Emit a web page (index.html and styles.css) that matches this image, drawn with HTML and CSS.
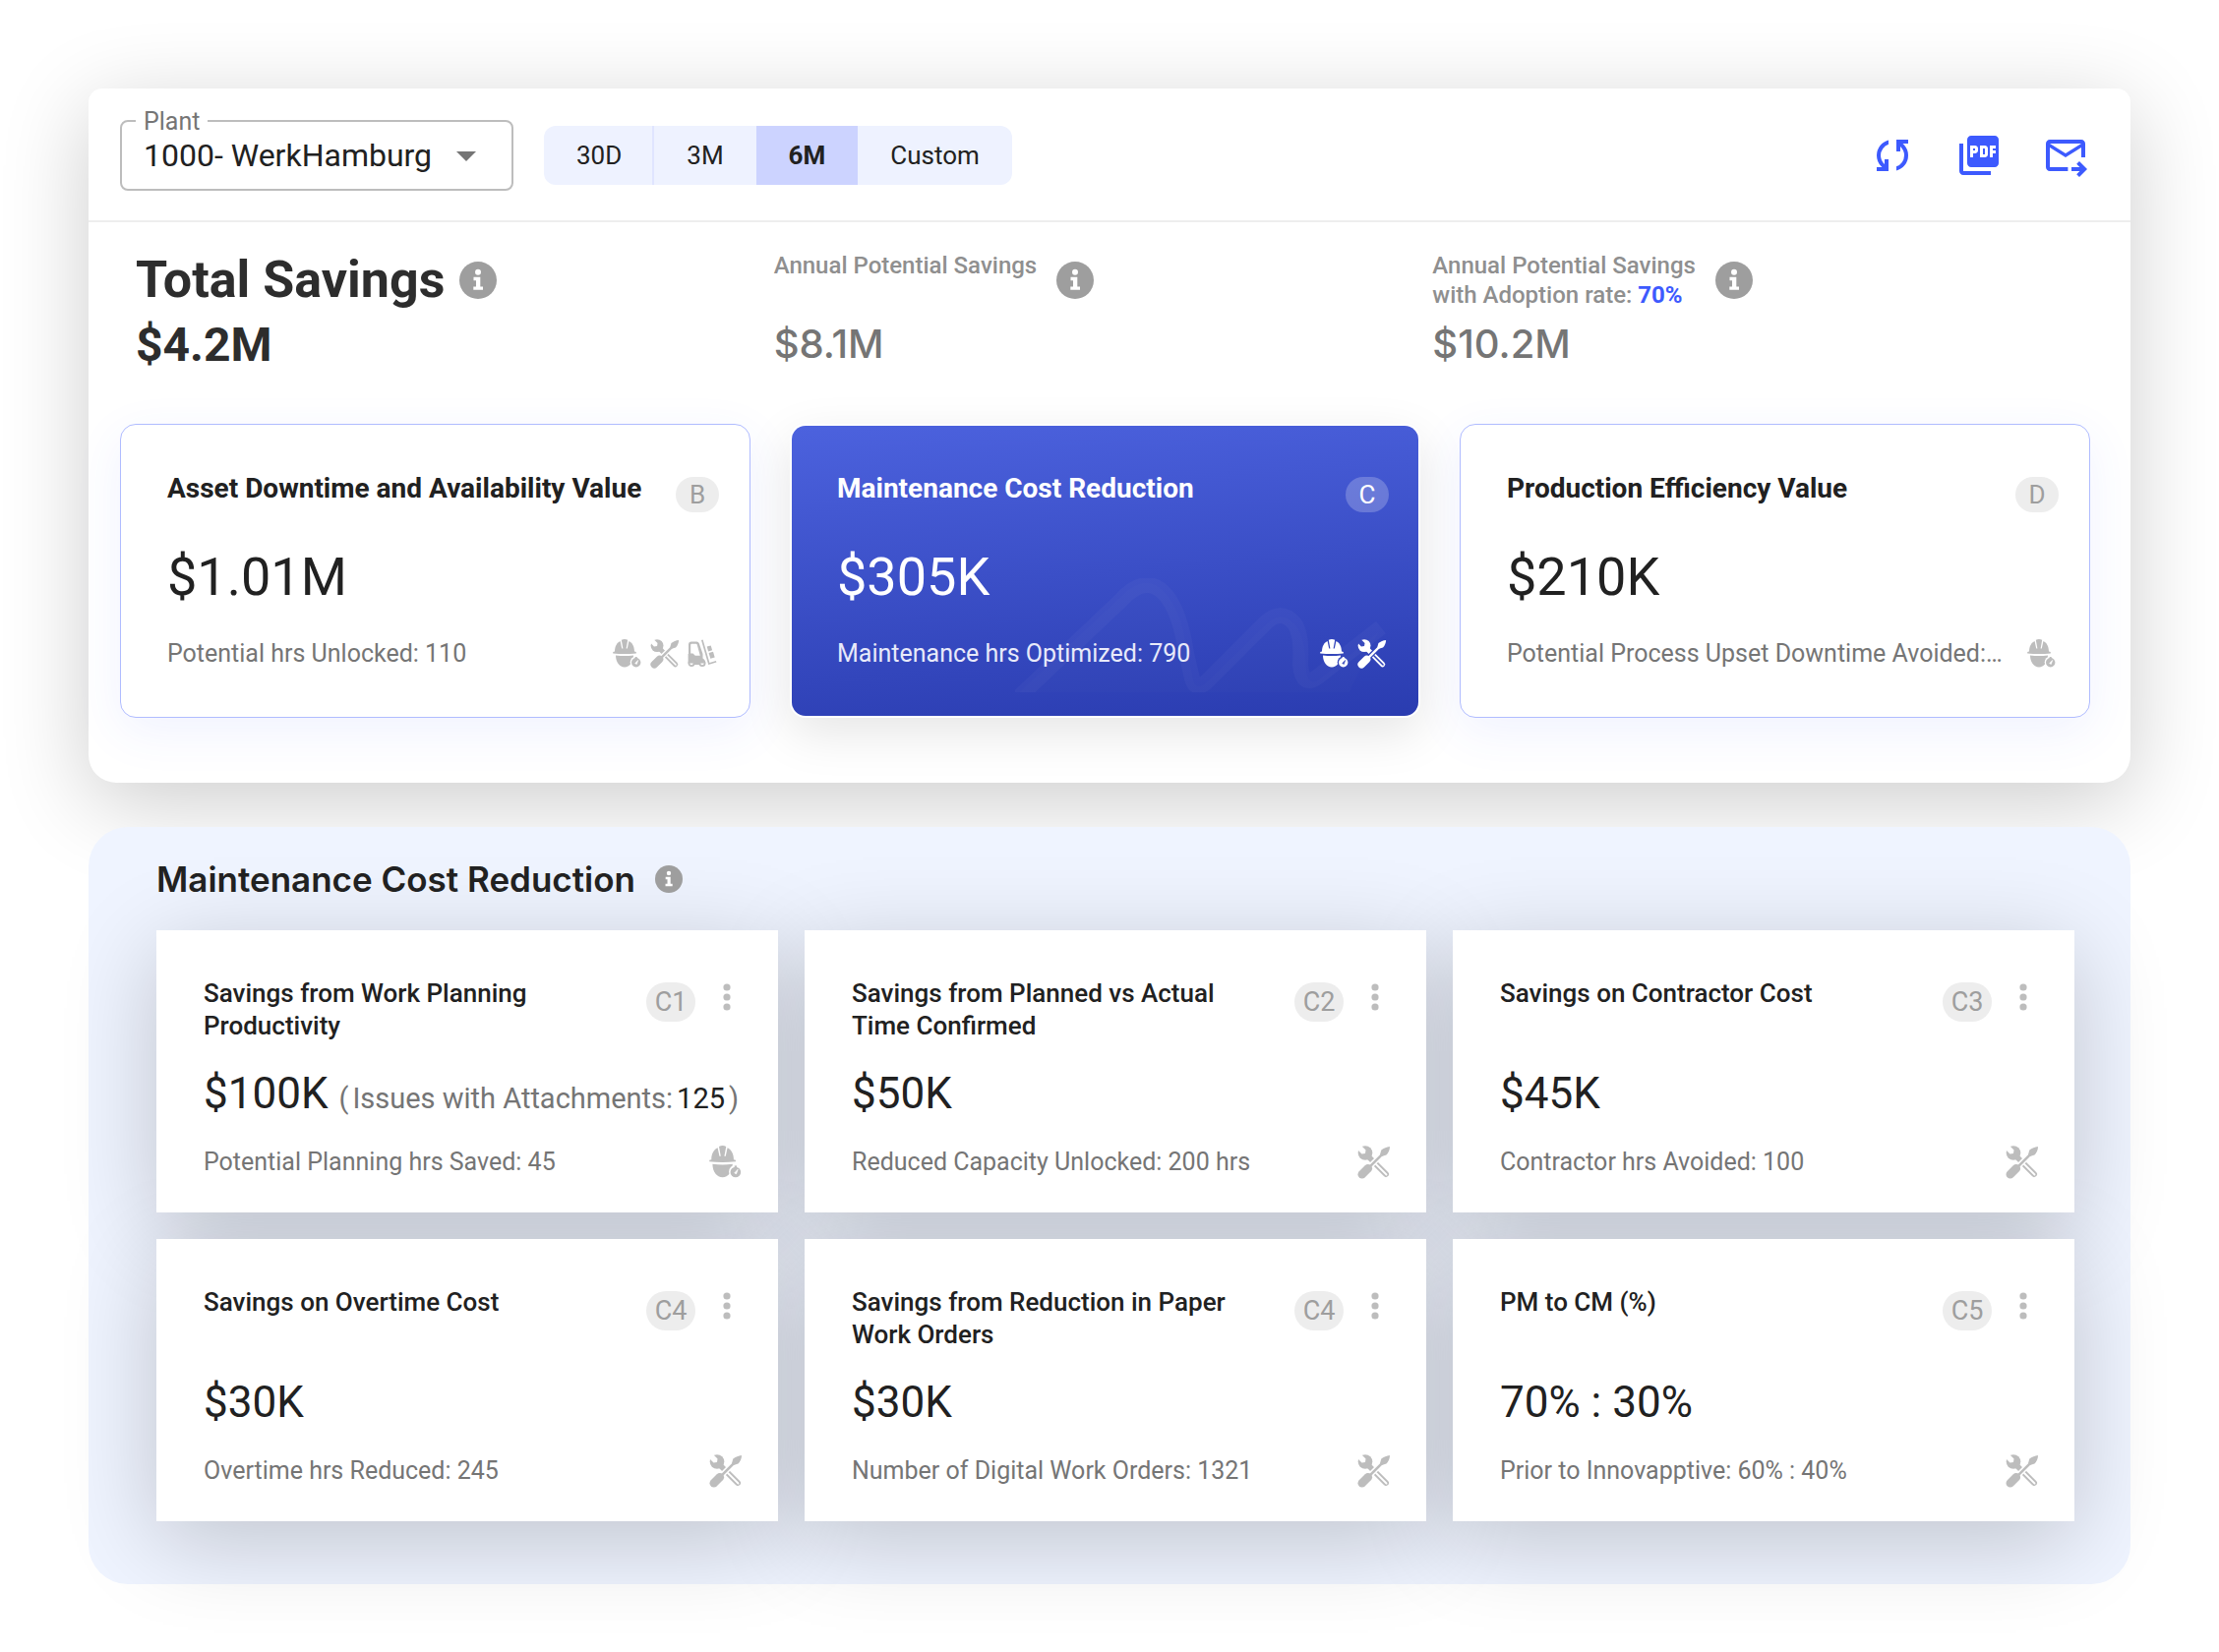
FILE: index.html
```html
<!DOCTYPE html>
<html lang="en">
<head>
<meta charset="utf-8">
<meta name="viewport" content="width=device-width, initial-scale=1">
<title>Total Savings</title>
<link rel="stylesheet" href="styles.css">
</head>
<body>
<svg class="sprite" aria-hidden="true">
  <defs>
    <mask id="helmet-cut" maskUnits="userSpaceOnUse" x="0" y="0" width="30" height="30">
      <rect width="30" height="30" fill="#fff"/>
      <circle cx="23.7" cy="23.5" r="6" fill="#000"/>
    </mask>
    <mask id="clock-cut" maskUnits="userSpaceOnUse" x="0" y="0" width="30" height="30">
      <rect width="30" height="30" fill="#fff"/>
      <path d="M22.7 24.6l3-3.2-1.4 4z" fill="#000" stroke="#000" stroke-width=".6"/>
    </mask>
    <mask id="wrench-cut" maskUnits="userSpaceOnUse" x="0" y="0" width="34" height="34">
      <rect width="34" height="34" fill="#fff"/>
      <path d="M3 -1L8.5 4.500 8 8 4.500 8.500-1 3z" fill="#000"/>
      <path d="M25 9L7 27" stroke="#000" stroke-width="5.500"/>
      <path d="M19 19L29.500 29.500" stroke="#000" stroke-width="1.800" stroke-linecap="round"/>
    </mask>
    <symbol id="i-helmet" viewBox="0 0 30 30">
      <g mask="url(#helmet-cut)">
        <path d="M2 12.500C2 7.500 4.200 3.400 7.600 2l1.600 7.500h1.200L8.800 .8Q12 -.6 15.200 .8L13.600 9.500h1.200L16.400 2C19.800 3.400 22 7.500 22 12.500l1.800 .6v1.300Q12 15.600 .2 14.400v-1.300z"/>
        <path d="M3 16.600q9 1 18 0C21 23.500 17 28.500 12 28.500S3 23.500 3 16.600z"/>
      </g>
      <g mask="url(#clock-cut)"><circle cx="23.700" cy="23.800" r="4.700"/><rect x="22.700" y="18" width="2" height="2"/></g>
    </symbol>
    <symbol id="i-tools" viewBox="0 0 34 34">
      <g mask="url(#wrench-cut)">
        <circle cx="8" cy="7.500" r="7.300"/>
        <path d="M10 10l6 6" stroke="currentColor" stroke-width="5.500"/>
        <path d="M17 17L29 29" stroke="currentColor" stroke-width="6" stroke-linecap="round"/>
      </g>
      <path d="M33 1c-3.200 .3-6.300 1.600-8.700 3.600L23 9.300l1.800 1.800 4.700-1.500C31.600 7.200 33 4.300 33 1z"/>
      <path d="M25 9.200L12 22.200" stroke="currentColor" stroke-width="2.600"/>
      <path d="M4.800 29.200l6-6" stroke="currentColor" stroke-width="8.600" stroke-linecap="round"/>
    </symbol>
    <symbol id="i-forklift" viewBox="0 0 30 30">
      <path fill-rule="evenodd" d="M1 15V5.500Q1 2.500 4 2.500h5.200q2 0 2.600 1.800L15.500 15v4.500q3 1.800 2.600 5h-5.800a3.500 3.500 0 0 0-5.200 0H.6V15zM3.200 14.500h2.300l2.300 2.200h5L9.700 5.400Q9.500 4.700 8.800 4.700H4.200q-1 0-1 1z"/>
      <circle cx="4" cy="24.500" r="2.600" fill="none" stroke="currentColor" stroke-width="1.800"/>
      <circle cx="15" cy="24.500" r="2.600" fill="none" stroke="currentColor" stroke-width="1.800"/>
      <path d="M7 21h6v5H7z"/>
      <path d="M14.800 .8L21.800 25l7.400-2.200" fill="none" stroke="currentColor" stroke-width="1.700"/>
      <path d="M19.700 7.600l4-1.200 1.400 4.800-4 1.200zM21.600 14l4.400-1.300 1.700 5.800-4.400 1.300z"/>
    </symbol>
    <symbol id="i-info" viewBox="0 0 38 38">
      <circle cx="19" cy="19" r="19"/>
      <g fill="#fff"><circle cx="19" cy="10.800" r="3"/><path d="M14.500 15.800h6.800v9.600h2.700v3.400h-9.700v-3.400H17v-6.200h-2.500z"/></g>
    </symbol>
    <symbol id="i-dots" viewBox="0 0 32 32">
      <circle cx="16" cy="6" r="3.600"/><circle cx="16" cy="16" r="3.600"/><circle cx="16" cy="26" r="3.600"/>
    </symbol>
  </defs>
</svg>

<main class="page">
  <section class="panel savings">
    <header class="toolbar">
      <div class="field">
        <label class="field-label" for="plant">Plant</label>
        <select class="field-select" id="plant"><option>1000- WerkHamburg</option></select>
        <svg class="field-arrow" viewBox="0 0 20 10" aria-hidden="true"><path d="M0 0h20L10 10z"/></svg>
      </div>
      <div class="segments" role="group" aria-label="Period">
        <button class="segment" type="button">30D</button>
        <button class="segment" type="button">3M</button>
        <button class="segment is-active" type="button" aria-pressed="true">6M</button>
        <button class="segment" type="button">Custom</button>
      </div>
      <div class="actions">
        <button class="action" type="button" aria-label="Refresh"><svg viewBox="0 0 24 24"><path d="M4 20v-2h2.750l-.4-.35q-1.225-1.225-1.787-2.662T4 12.050q0-2.775 1.663-4.937T10 4.250v2.100Q8.200 7 7.100 8.563T6 12.050q0 1.125.425 2.188T7.750 16.200l.25.25V14h2v6zm10-.25v-2.100q1.800-.65 2.900-2.212T18 11.950q0-1.125-.425-2.187T16.250 7.800L16 7.550V10h-2V4h6v2h-2.750l.4.35q1.225 1.225 1.788 2.663T20 11.950q0 2.775-1.662 4.938T14 19.750"/></svg></button>
        <button class="action" type="button" aria-label="Export as PDF"><svg viewBox="0 0 24 24"><path d="M20 2H8c-1.100 0-2 .9-2 2v12c0 1.100.9 2 2 2h12c1.100 0 2-.9 2-2V4c0-1.100-.9-2-2-2zm-8.500 7.500c0 .83-.67 1.500-1.500 1.500H9v2H7.500V7H10c.83 0 1.500.67 1.500 1.500v1zm5 2c0 .83-.67 1.500-1.500 1.500h-2.500V7H15c.83 0 1.500.67 1.500 1.500v3zm4-3H19v1h1.500V11H19v2h-1.500V7h3v1.500zM9 9.500h1v-1H9v1zM4 6H2v14c0 1.100.9 2 2 2h14v-2H4V6zm10 5.500h1v-3h-1v3z"/></svg></button>
        <button class="action" type="button" aria-label="Send by mail"><svg viewBox="0 0 24 24"><path d="M20 4H4c-1.100 0-2 .9-2 2v12c0 1.100.9 2 2 2h9.200v-2H4V8l8 5 8-5v5h2V6c0-1.100-.9-2-2-2zm-8 7L4 6h16z"/><path d="M15 18h4.200l-1.600-1.600L19 15l4 4-4 4-1.400-1.400 1.600-1.600H15z"/></svg></button>
      </div>
    </header>

    <div class="kpis">
      <div class="kpi kpi-main">
        <div class="kpi-head"><h1 class="kpi-title">Total Savings</h1><svg class="info"><use href="#i-info"/></svg></div>
        <p class="kpi-value">$4.2M</p>
      </div>
      <div class="kpi">
        <div class="kpi-head"><h2 class="kpi-title">Annual Potential Savings</h2><svg class="info"><use href="#i-info"/></svg></div>
        <p class="kpi-value">$8.1M</p>
      </div>
      <div class="kpi">
        <div class="kpi-head"><h2 class="kpi-title">Annual Potential Savings<br>with Adoption rate: <strong class="rate">70%</strong></h2><svg class="info"><use href="#i-info"/></svg></div>
        <p class="kpi-value">$10.2M</p>
      </div>
    </div>

    <div class="values">
      <article class="value-card">
        <div class="value-head"><h2 class="value-title">Asset Downtime and Availability Value</h2><span class="badge">B</span></div>
        <p class="value-amount">$1.01M</p>
        <div class="value-foot"><p class="note">Potential hrs Unlocked: 110</p><span class="icons"><svg class="icon"><use href="#i-helmet"/></svg><svg class="icon"><use href="#i-tools"/></svg><svg class="icon"><use href="#i-forklift"/></svg></span></div>
      </article>
      <article class="value-card is-selected">
        <svg class="wave" viewBox="0 0 410 116" aria-hidden="true">
          <path class="wave-fill" d="M4 116L108 18Q134 -8 154 16Q170 36 174 70L182 106Q186 114 194 106L256 46Q270 32 284 46Q296 60 296 92Q298 112 310 102L370 54L340 116z"/>
          <path class="wave-line" d="M-8 132L108 22Q134 -6 154 18Q168 36 174 76L180 102Q184 116 196 104L254 46Q270 30 284 46Q292 58 290 88Q292 112 308 100L372 50"/>
        </svg>
        <div class="value-head"><h2 class="value-title">Maintenance Cost Reduction</h2><span class="badge">C</span></div>
        <p class="value-amount">$305K</p>
        <div class="value-foot"><p class="note">Maintenance hrs Optimized: 790</p><span class="icons"><svg class="icon"><use href="#i-helmet"/></svg><svg class="icon"><use href="#i-tools"/></svg></span></div>
      </article>
      <article class="value-card">
        <div class="value-head"><h2 class="value-title">Production Efficiency Value</h2><span class="badge">D</span></div>
        <p class="value-amount">$210K</p>
        <div class="value-foot"><p class="note">Potential Process Upset Downtime Avoided:…</p><span class="icons"><svg class="icon"><use href="#i-helmet"/></svg></span></div>
      </article>
    </div>
  </section>

  <section class="panel details">
    <div class="details-head"><h2 class="details-title">Maintenance Cost Reduction</h2><svg class="info info-small"><use href="#i-info"/></svg></div>
    <div class="grid">
      <article class="card">
        <div class="card-head"><h3 class="card-title">Savings from Work Planning Productivity</h3><span class="badge badge-large">C1</span><button class="more" type="button" aria-label="More"><svg><use href="#i-dots"/></svg></button></div>
        <p class="card-amount">$100K <span class="extra">(<span>Issues with Attachments:</span><b>125</b>)</span></p>
        <div class="card-foot"><p class="note">Potential Planning hrs Saved: 45</p><svg class="icon"><use href="#i-helmet"/></svg></div>
      </article>
      <article class="card">
        <div class="card-head"><h3 class="card-title">Savings from Planned vs Actual Time Confirmed</h3><span class="badge badge-large">C2</span><button class="more" type="button" aria-label="More"><svg><use href="#i-dots"/></svg></button></div>
        <p class="card-amount">$50K</p>
        <div class="card-foot"><p class="note">Reduced Capacity Unlocked: 200 hrs</p><svg class="icon"><use href="#i-tools"/></svg></div>
      </article>
      <article class="card">
        <div class="card-head"><h3 class="card-title">Savings on Contractor Cost</h3><span class="badge badge-large">C3</span><button class="more" type="button" aria-label="More"><svg><use href="#i-dots"/></svg></button></div>
        <p class="card-amount">$45K</p>
        <div class="card-foot"><p class="note">Contractor hrs Avoided: 100</p><svg class="icon"><use href="#i-tools"/></svg></div>
      </article>
      <article class="card">
        <div class="card-head"><h3 class="card-title">Savings on Overtime Cost</h3><span class="badge badge-large">C4</span><button class="more" type="button" aria-label="More"><svg><use href="#i-dots"/></svg></button></div>
        <p class="card-amount">$30K</p>
        <div class="card-foot"><p class="note">Overtime hrs Reduced: 245</p><svg class="icon"><use href="#i-tools"/></svg></div>
      </article>
      <article class="card">
        <div class="card-head"><h3 class="card-title">Savings from Reduction in Paper Work Orders</h3><span class="badge badge-large">C4</span><button class="more" type="button" aria-label="More"><svg><use href="#i-dots"/></svg></button></div>
        <p class="card-amount">$30K</p>
        <div class="card-foot"><p class="note">Number of Digital Work Orders: 1321</p><svg class="icon"><use href="#i-tools"/></svg></div>
      </article>
      <article class="card">
        <div class="card-head"><h3 class="card-title">PM to CM (%)</h3><span class="badge badge-large">C5</span><button class="more" type="button" aria-label="More"><svg><use href="#i-dots"/></svg></button></div>
        <p class="card-amount">70% : 30%</p>
        <div class="card-foot"><p class="note">Prior to Innovapptive: 60% : 40%</p><svg class="icon"><use href="#i-tools"/></svg></div>
      </article>
    </div>
  </section>
</main>
</body>
</html>
```

FILE: styles.css
```css
* { box-sizing: border-box; }

body {
  margin: 0;
  background: #fff;
  color: #212121;
  font-family: Roboto, "Liberation Sans", sans-serif;
}

h1, h2, h3, p { margin: 0; font-weight: 400; }
button, select { font: inherit; color: inherit; border: 0; padding: 0; background: none; cursor: pointer; }
svg { display: block; fill: currentColor; flex: none; }
.sprite { position: absolute; width: 0; height: 0; }

.page { display: flex; flex-direction: column; gap: 45px; padding: 90px 90px 70px; }

/* Savings panel */
.savings {
  background: #fff;
  border-radius: 14px 14px 28px 28px;
  padding-bottom: 66px;
  box-shadow: 0 20px 90px rgba(0, 0, 0, .2);
}

.toolbar {
  display: flex;
  align-items: center;
  min-height: 136px;
  padding: 2px 42px 0 32px;
  border-bottom: 2px solid #eee;
}

.field {
  position: relative;
  display: flex;
  align-items: center;
  width: 400px;
  height: 72px;
  border: 2px solid #bdbdbd;
  border-radius: 8px;
}
.field-label {
  position: absolute;
  left: 14px;
  top: -14px;
  padding: 0 8px;
  background: #fff;
  color: #757575;
  font-size: 25px;
  line-height: 28px;
}
.field-select {
  appearance: none;
  width: 100%;
  height: 100%;
  padding-left: 22px;
  font-size: 32px;
  outline: 0;
}
.field-arrow { position: absolute; right: 36px; top: 30px; width: 20px; height: 10px; color: #757575; pointer-events: none; }

.segments { display: flex; margin-left: 31px; border-radius: 12px; overflow: hidden; background: #eef2ff; }
.segment { height: 60px; padding: 0 33px; font-size: 26px; }
.segment:first-child { padding-right: 31px; border-right: 2px solid #e0e5ff; }
.segment.is-active { background: #ccd3ff; font-weight: 700; }

.actions { display: flex; gap: 40px; margin-left: auto; color: #3d5afe; }
.action svg { width: 48px; height: 48px; }

.kpis { display: grid; grid-template-columns: 649fr 670fr 710fr; padding: 29px 0 0 48px; }
.kpi { color: #757575; }
.kpi-head { display: flex; align-items: center; gap: 20px; height: 60px; }
.kpi-title { align-self: flex-start; color: #8f8f8f; font-size: 24px; font-weight: 500; line-height: 30px; }
.kpi-value { margin-top: 4px; font-family: Inter, Roboto, sans-serif; font-size: 40px; font-weight: 500; line-height: 62px; }
.kpi-main { color: #2d2d2d; }
.kpi-main .kpi-head { gap: 15px; }
.kpi-main .kpi-title { color: inherit; font-size: 52px; font-weight: 700; line-height: 60px; }
.kpi-main .kpi-value { font-family: inherit; font-size: 48px; font-weight: 700; line-height: 64px; }
.rate { color: #3d5afe; font-weight: 700; }
.info { width: 38px; height: 38px; color: #9e9e9e; }
.info-small { width: 28px; height: 28px; }

.values { display: grid; grid-template-columns: repeat(3, minmax(0, 1fr)); gap: 40px; padding: 48px 41px 0 32px; }
.value-card {
  position: relative;
  padding: 48px 31px 47px 47px;
  border: 1px solid #b0bcff;
  border-radius: 16px;
  background: #fff;
  box-shadow: 0 14px 50px rgba(61, 90, 254, .08);
}
.value-head { display: flex; align-items: flex-start; justify-content: space-between; position: relative; height: 34px; }
.value-title { font-size: 28px; font-weight: 700; line-height: 34px; white-space: nowrap; }
.value-amount { margin: 41px 0 29px; font-size: 54px; line-height: 64px; position: relative; }
.value-foot { display: flex; align-items: center; gap: 16px; justify-content: space-between; position: relative; height: 34px; }
.icons { display: flex; gap: 8px; padding-right: 2px; color: #bdbdbd; }
.icon { width: 30px; height: 30px; color: #bdbdbd; }
.note { color: #757575; font-size: 25px; line-height: 34px; overflow: hidden; text-overflow: ellipsis; white-space: nowrap; }

.badge {
  flex: none;
  width: 44px;
  height: 36px;
  margin-top: 5px;
  border-radius: 18px;
  background: #ededed;
  color: #9e9e9e;
  font-size: 26px;
  line-height: 36px;
  text-align: center;
}
.badge-large { width: 50px; height: 40px; border-radius: 20px; line-height: 40px; font-size: 27px; }

.is-selected {
  padding: 47px 30px 46px 46px;
  border: 2px solid transparent;
  background: linear-gradient(175deg, #4c62de, #2a3cb0) padding-box;
  color: #fff;
  box-shadow: 0 16px 50px rgba(0, 0, 0, .1);
}
.is-selected .badge { background: rgba(255, 255, 255, .22); color: #fff; }
.is-selected .note { color: #e8eafa; }
.is-selected .icon { color: #fff; }
.wave { position: absolute; right: 0; bottom: 24px; width: 410px; height: 116px; }
.wave-fill { fill: rgba(255, 255, 255, .01); }
.wave-line { fill: none; stroke: rgba(255, 255, 255, .03); stroke-width: 16px; }

/* Detail panel */
.details { position: relative; border-radius: 40px; background: #eff4ff; padding: 31px 57px 64px 69px; }
.details-head { position: relative; z-index: 1; display: flex; align-items: center; gap: 20px; }
.details-title { font-family: Inter, Roboto, sans-serif; font-size: 35px; font-weight: 600; line-height: 44px; }
.grid { display: grid; grid-template-columns: repeat(3, minmax(0, 1fr)); gap: 27px; margin-top: 30px; isolation: isolate; }
.card { position: relative; padding: 48px 36px 34px 48px; background: #fff; }
.card::before { content: ""; position: absolute; inset: 0; z-index: -1; box-shadow: 0 20px 90px rgba(0, 0, 0, .2); }
.card-head { display: flex; align-items: flex-start; height: 66px; }
.card-title { flex: 1; padding-right: 48px; font-size: 26px; font-weight: 500; line-height: 33px; }
.more { margin: 4px 0 0 16px; color: #bdbdbd; }
.more svg { width: 32px; height: 32px; }
.card-amount { margin: 26px 0 27px; font-size: 44px; line-height: 52px; white-space: nowrap; }
.extra { color: #757575; font-size: 29px; line-height: 1; }
.extra span { margin: 0 4px; }
.extra b { margin-right: 4px; color: #212121; font-weight: 400; }
.card-foot { display: flex; align-items: center; justify-content: space-between; height: 34px; }
.card .icon { width: 34px; height: 34px; }
```
